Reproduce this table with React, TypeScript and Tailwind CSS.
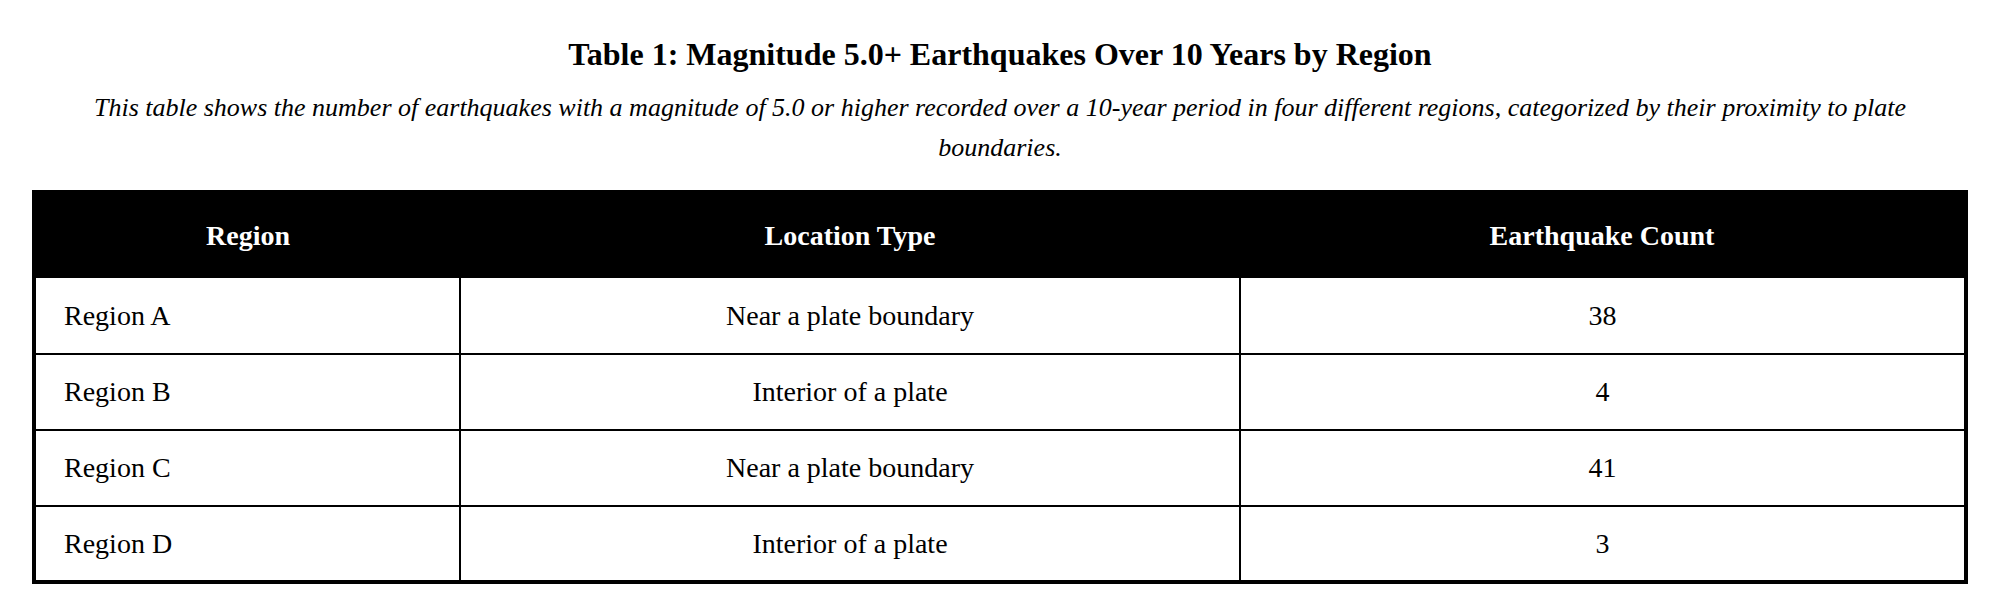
const rows = [
  { region: 'Region A', type: 'Near a plate boundary', count: 38 },
  { region: 'Region B', type: 'Interior of a plate', count: 4 },
  { region: 'Region C', type: 'Near a plate boundary', count: 41 },
  { region: 'Region D', type: 'Interior of a plate', count: 3 },
];

export default function App() {
  return (
    <div className="min-h-screen bg-white px-[32px] pt-[36px] text-black font-['Liberation_Serif',_'Times_New_Roman',_serif]">
      {/* Caption */}
      <h1 className="text-center text-[32px] leading-[36px] font-bold">
        Table 1: Magnitude 5.0+ Earthquakes Over 10 Years by Region
      </h1>
      <p className="mt-[16px] px-[40px] text-center text-[26px] leading-[40px] italic">
        This table shows the number of earthquakes with a magnitude of 5.0 or higher recorded over a 10-year period in four different regions, categorized by their proximity to plate boundaries.
      </p>

      {/* Table */}
      <div className="mt-[22px] border-[4px] border-black">
        <table className="w-full table-fixed border-collapse">
          <colgroup>
            <col className="w-[424px]" />
            <col className="w-[780px]" />
            <col className="w-[724px]" />
          </colgroup>
          <thead>
            <tr className="bg-black text-white">
              <th className="h-[84px] p-0 text-center text-[28px] font-bold">Region</th>
              <th className="h-[84px] p-0 text-center text-[28px] font-bold">Location Type</th>
              <th className="h-[84px] p-0 text-center text-[28px] font-bold">Earthquake Count</th>
            </tr>
          </thead>
          <tbody className="text-[28px]">
            {rows.map((row, i) => {
              const last = i === rows.length - 1;
              const h = last ? 'h-[74px]' : 'h-[76px]';
              return (
                <tr key={row.region} className={last ? '' : 'border-b-2 border-black'}>
                  <td className={`${h} py-0 pl-[28px] text-left`}>{row.region}</td>
                  <td className={`${h} py-0 border-l-2 border-black text-center`}>{row.type}</td>
                  <td className={`${h} py-0 border-l-2 border-black text-center`}>{row.count}</td>
                </tr>
              );
            })}
          </tbody>
        </table>
      </div>
    </div>
  );
}
